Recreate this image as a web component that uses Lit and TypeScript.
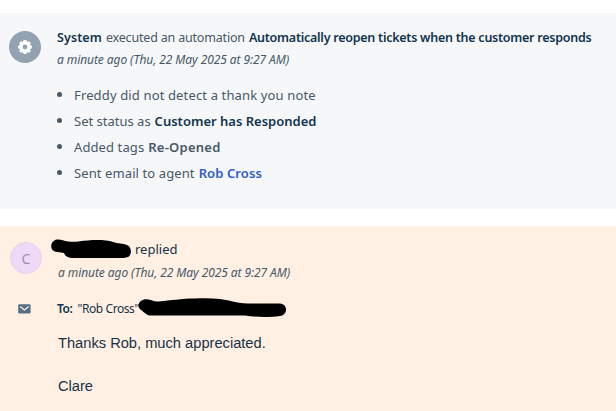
import { LitElement, html, css, svg } from 'lit';
import { customElement, property } from 'lit/decorators.js';

const gearIcon = html`<svg xmlns="http://www.w3.org/2000/svg" viewBox="0 0 14 14" width="14" height="14">
  <g fill="#fff">
    ${[0, 45, 90, 135].map(a => svg`<rect x="5.2" y="0.1" width="3.6" height="13.8" rx="1" transform="rotate(${a} 7 7)"/>`)}
    <circle cx="7" cy="7" r="5.7"/>
  </g>
  <circle cx="7" cy="7" r="2.4" fill="#92a2b1"/>
</svg>`;

const mailIcon = html`<svg xmlns="http://www.w3.org/2000/svg" viewBox="0 0 13 10" width="13" height="10">
  <rect x="0.2" y="0.3" width="12.4" height="9.2" rx="1.2" fill="#566f83"/>
  <path d="M2.2 2.5 6.4 6 10.6 2.5" fill="none" stroke="#fff1e4" stroke-width="1.3"/>
</svg>`;

@customElement('redacted-mark')
export class RedactedMark extends LitElement {
    static styles = css`
        :host {
            display: block;
            flex: none;
        }
        svg {
            display: block;
        }
    `;

    @property() path = '';
    @property({ type: Number }) width = 0;
    @property({ type: Number }) height = 0;

    render() {
        return html`<svg viewBox="0 0 ${this.width} ${this.height}" width="${this.width}" height="${this.height}">
          <path d="${this.path}" fill="#000"/>
        </svg>`;
    }
}

@customElement('app-root')
export class AppRoot extends LitElement {
    static styles = css`
        :host {
            display: block;
            box-sizing: border-box;
            height: 411px;
            padding-top: 13px;
            overflow: hidden;
            background: #fff;
            color: #475867;
            font-family: "Noto Sans", "Open Sans", sans-serif;
            font-size: 13px;
            line-height: 20px;
            white-space: nowrap;
        }
        b {
            font-weight: 600;
            color: #12344d;
        }
        .activity {
            box-sizing: border-box;
            display: flex;
            height: 196px;
            padding: 14px 0 0 9px;
            gap: 16px;
            background: #f5f7f9;
        }
        .avatar {
            box-sizing: border-box;
            display: flex;
            flex: none;
            align-items: center;
            justify-content: center;
            width: 32px;
            height: 32px;
            border-radius: 50%;
        }
        .system {
            margin-top: 4px;
            background: #92a2b1;
        }
        .customer {
            margin-top: 3px;
            padding-top: 1px;
            border: 1px solid #e6d3ee;
            background: #eedaf6;
            color: #a58ab4;
            font-size: 14px;
        }
        .time {
            margin-top: 3px;
            font-size: 12px;
            font-style: italic;
            letter-spacing: -0.08px;
        }
        ul {
            margin: 12px 0 0;
            padding: 0 0 0 17px;
            list-style: none;
            line-height: 26px;
        }
        li {
            display: flex;
            gap: 4px;
            letter-spacing: 0.1px;
        }
        li::before {
            content: "";
            flex: none;
            width: 5px;
            height: 5px;
            margin: 10px 8px 0 -17px;
            border-radius: 50%;
            background: #475867;
        }
        .title {
            display: flex;
            gap: 4px;
        }
        .activity .title {
            padding-top: 1px;
            font-size: 12.5px;
        }
        .activity .time {
            margin-top: 2px;
        }
        .who {
            letter-spacing: 0.1px;
        }
        .did {
            letter-spacing: -0.18px;
        }
        .rule {
            letter-spacing: -0.25px;
        }
        .note {
            letter-spacing: 0.14px;
        }
        .state {
            letter-spacing: 0;
        }
        .tag {
            color: #475867;
            letter-spacing: 0.25px;
        }
        .agent {
            color: #2c5cc5;
        }
        .reply {
            box-sizing: border-box;
            height: 185px;
            margin-top: 17px;
            padding: 13px 0 0 10px;
            background: #fff0e3;
            color: #183247;
        }
        .head {
            display: flex;
            gap: 9px;
        }
        .head .title {
            gap: 3px;
        }
        .head .time {
            margin: 4px 0 0 7px;
            color: #475867;
        }
        .to {
            display: flex;
            align-items: center;
            height: 20px;
            margin-top: 16px;
            padding-left: 8px;
            font-size: 12px;
            letter-spacing: -0.42px;
        }
        .to svg {
            margin-right: 26px;
        }
        .to b {
            margin-right: 5px;
        }
        .to redacted-mark {
            margin: -2px 0 0 -1px;
        }
        .message {
            margin: 14px 0 0 48px;
            font-family: "Liberation Sans", Arial, sans-serif;
            font-size: 14.67px;
            line-height: 21.5px;
        }
        .message p {
            margin: 0 0 21.5px;
        }
    `;

    render() {
        return html`
          <section class="activity">
            <div class="avatar system">${gearIcon}</div>
            <div>
              <div class="title">
                <b class="who">System</b><span class="did">executed an automation</span>
                <b class="rule">Automatically reopen tickets when the customer responds</b>
              </div>
              <div class="time">a minute ago (Thu, 22 May 2025 at 9:27 AM)</div>
              <ul>
                <li><span class="note">Freddy did not detect a thank you note</span></li>
                <li class="state"><span>Set status as</span><b>Customer has Responded</b></li>
                <li><span>Added tags</span><b class="tag">Re-Opened</b></li>
                <li><span>Sent email to agent</span><b class="agent">Rob Cross</b></li>
              </ul>
            </div>
          </section>
          <section class="reply">
            <div class="head">
              <div class="avatar customer">C</div>
              <div>
                <div class="title">
                  <redacted-mark width="81" height="20"
                    path="M6 0.5C9 0 13 1.5 17 2.5C24 3.5 29 2 37 1.5C46 0.5 56 1 62 3C67 4.5 72 4.5 76 6C81 8 81 16 77 18C73 19.5 67 19 60 19L22 19C17 19 14 17 13 14C9 13 4 13.5 1.5 11C-1 8 0 1.5 6 0.5Z"></redacted-mark>
                  <span>replied</span>
                </div>
                <div class="time">a minute ago (Thu, 22 May 2025 at 9:27 AM)</div>
              </div>
            </div>
            <div class="to">
              ${mailIcon}<b>To:</b><span>"Rob Cross"</span>
              <redacted-mark width="149" height="20"
                path="M6 1.5C11 0.5 15 4 21 3.5C33 2.5 43 0.5 57 0.5C73 0 84 0.5 97 4C102 5.5 108 5.5 115 5.5L142 5.5C150 6 150 17 142 18C132 19.5 119 19.5 107 17.5L12 17.5C8 17 6 14 3 12C-1 9 0 3 6 1.5Z"></redacted-mark>
            </div>
            <div class="message">
              <p>Thanks Rob, much appreciated.</p>
              <p>Clare</p>
            </div>
          </section>
        `;
    }
}
